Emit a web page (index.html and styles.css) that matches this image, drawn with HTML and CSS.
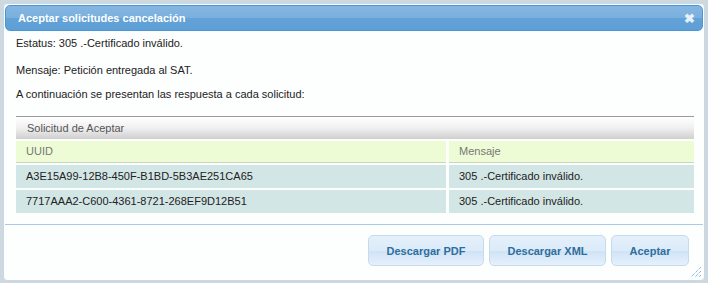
FILE: index.html
```html
<!DOCTYPE html>
<html lang="es">
  <head>
    <meta charset="UTF-8" />
    <title>Aceptar solicitudes cancelación</title>
    <link rel="stylesheet" href="styles.css">
  </head>
  <body>
    <div class="page">
      <div class="dialog">
        <div class="titlebar">
          <span class="title">Aceptar solicitudes cancelación</span>
          <span class="close">&#10006;</span>
        </div>

        <div class="content">
          <p class="line first">Estatus: 305 .-Certificado inválido.</p>
          <p class="line">Mensaje: Petición entregada al SAT.</p>
          <p class="line">A continuación se presentan las respuesta a cada solicitud:</p>

          <div class="grid">
            <div class="caption">Solicitud de Aceptar</div>
            <div class="head">UUID</div>
            <div class="head">Mensaje</div>
            <div class="cell">A3E15A99-12B8-450F-B1BD-5B3AE251CA65</div>
            <div class="cell">305 .-Certificado inválido.</div>
            <div class="cell">7717AAA2-C600-4361-8721-268EF9D12B51</div>
            <div class="cell">305 .-Certificado inválido.</div>
          </div>
        </div>

        <div class="buttonpane">
          <button class="btn">Descargar PDF</button>
          <button class="btn">Descargar XML</button>
          <button class="btn">Aceptar</button>
        </div>

        <svg class="grip" width="12" height="12" viewBox="0 0 12 12">
          <path d="M11 1 L1 11 M11 5 L5 11 M11 9 L9 11" stroke="#5b9ad8" stroke-width="1" stroke-dasharray="1 1" fill="none" />
        </svg>
      </div>
    </div>
  </body>
</html>
```

FILE: styles.css
```css
body {
  margin: 0;
  font-family: "Liberation Sans", Arial, sans-serif;
  background-color: #cdd9df;
}
.page {
  padding: 3px 3px 0 3px;
  height: 280px;
}
.dialog {
  position: relative;
  box-sizing: border-box;
  height: 278px;
  background: #fdfefe;
  border: 1px solid #c8d8e4;
  border-radius: 4px;
  padding: 1px;
}
.titlebar {
  display: flex;
  align-items: center;
  justify-content: space-between;
  height: 24px;
  padding: 0 7px 0 12px;
  border: 1px solid #4a97d8;
  border-radius: 5px;
  background: linear-gradient(to bottom, #84b6e0 0%, #7bb0de 48%, #63a2d7 52%, #5e9fd6 100%);
  color: #fff;
  font-size: 11px;
  font-weight: bold;
}
.close {
  font-size: 13px;
  color: #e8f1fa;
}
.content {
  padding: 6px 10px 0 11px;
  font-size: 11px;
  color: #222;
}
.line {
  margin: 0 0 11px 0;
  line-height: 13px;
}
.line.first {
  margin-bottom: 14px;
}
.grid {
  display: grid;
  grid-template-columns: 430px 1fr;
  gap: 2px 3px;
  margin-top: 15px;
  width: 678px;
}
.caption {
  grid-column: 1 / 3;
  height: 22px;
  line-height: 22px;
  padding-left: 11px;
  border-top: 1px solid #9a9a9a;
  background: linear-gradient(to bottom, #ffffff 0%, #f0f0f0 50%, #cfcfcf 100%);
  color: #555;
}
.head {
  height: 21px;
  line-height: 21px;
  padding-left: 10px;
  background: #eefcd6;
  border-bottom: 1px solid #c9d6bf;
  color: #777;
}
.cell {
  height: 23px;
  line-height: 23px;
  padding-left: 10px;
  background: #d3e6e6;
  color: #222;
}
.buttonpane {
  display: flex;
  justify-content: flex-end;
  gap: 5px;
  margin-top: 11px;
  padding: 10px 14px 0 0;
  border-top: 1px solid #a9cbe9;
}
.btn {
  height: 31px;
  padding: 0;
  white-space: nowrap;
  font-family: "Liberation Sans", Arial, sans-serif;
  font-size: 11px;
  font-weight: bold;
  color: #2e6e9e;
  background: linear-gradient(to bottom, #e4f0fb 0%, #dcebf9 50%, #cfe3f6 52%, #e6f1fc 100%);
  border: 1px solid #c5dbec;
  border-radius: 5px;
}
.btn:nth-child(1) {
  width: 116px;
}
.btn:nth-child(2) {
  width: 117px;
}
.btn:nth-child(3) {
  width: 78px;
}
.grip {
  position: absolute;
  right: 2px;
  bottom: 2px;
}
```
